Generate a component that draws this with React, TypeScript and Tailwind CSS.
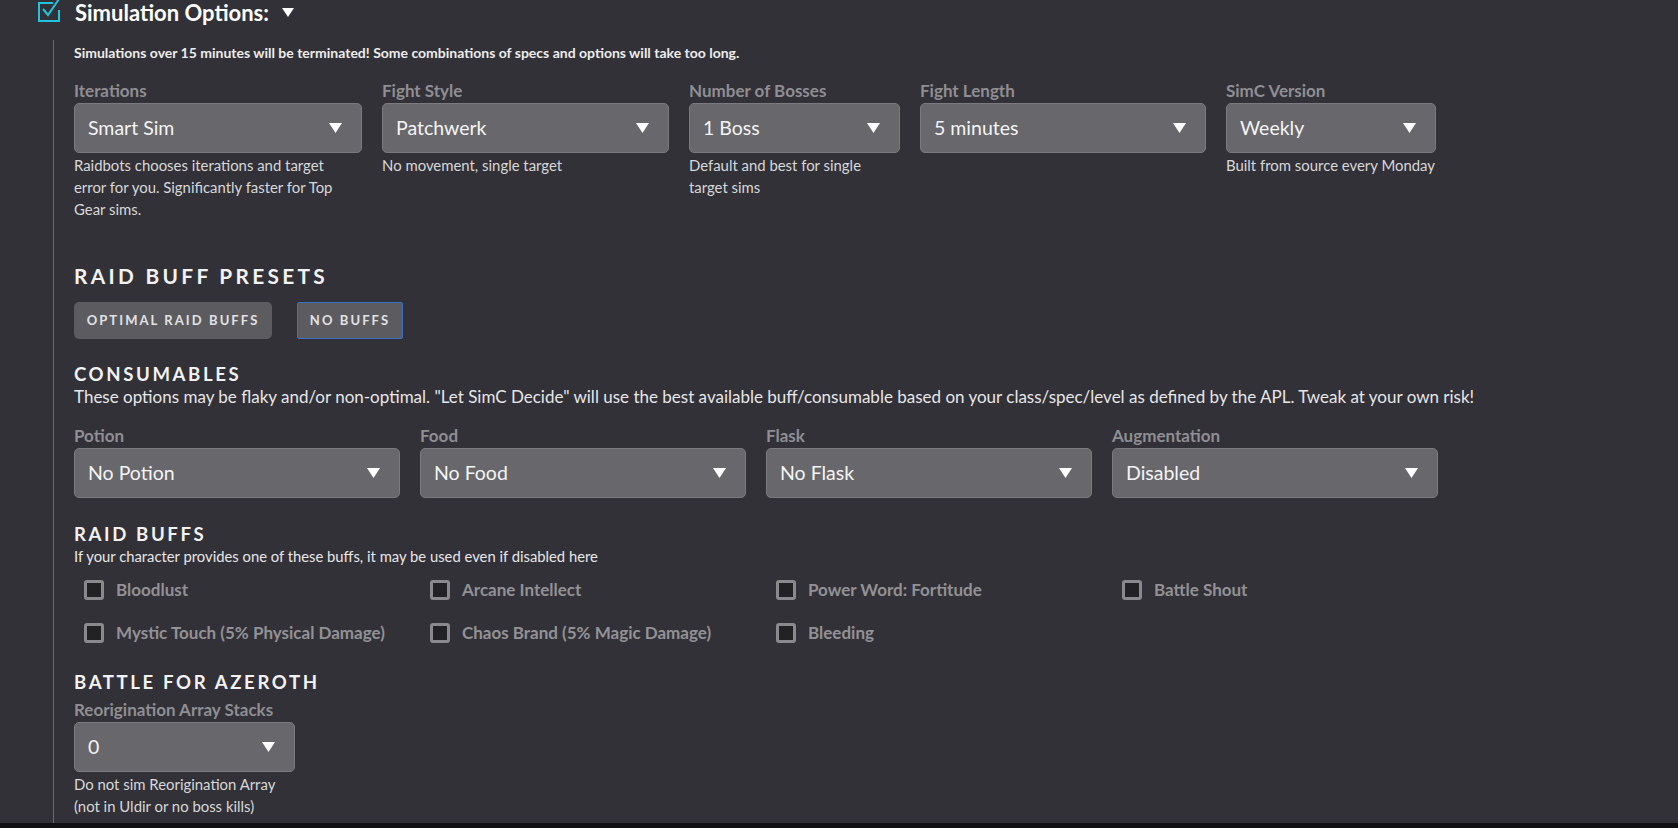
import React from "react";

type SelectProps = { label: string; value: string; help?: React.ReactNode; w: string };

function Caret() {
    return (
        <svg width="13" height="10" viewBox="0 0 13 10" className="shrink-0">
            <path d="M0 0 H13 L6.5 10 Z" fill="#ffffff" />
        </svg>
    );
}

function Select({ label, value, help, w }: SelectProps) {
    return (
        <div className={`${w} shrink-0`}>
            <div className="text-[17px] font-bold leading-[20px] text-[#8f8e93] mb-[2px]">{label}</div>
            <div className="h-[50px] rounded-[5px] border border-[#7b7a7f] bg-[#68676c] flex items-center justify-between pl-[13px] pr-[19px]">
                <span className="text-[19.5px] text-[#f4f4f4]">{value}</span>
                <Caret />
            </div>
            {help && <div className="mt-[1px] max-w-[266px] text-[14.9px] leading-[22px] text-[#d8d8da]">{help}</div>}
        </div>
    );
}

function Check({ label }: { label: string }) {
    return (
        <div className="w-[346px] h-[30px] pl-[10px] flex items-center gap-[12px]">
            <span className="w-[20px] h-[20px] rounded-[3px] border-[3px] border-[#8a898e] bg-[#222124]" />
            <span className="text-[17px] font-bold text-[#929196]">{label}</span>
        </div>
    );
}

const heading = "font-bold text-[#f2f2f2] uppercase";

export default function App() {
    return (
        <div className="h-[828px] w-full overflow-hidden bg-[#323137] font-['Lato','Liberation_Sans',sans-serif] flex flex-col">
            <div className="flex items-center h-[25px] pl-[37px]">
                <svg width="25" height="25" viewBox="0 0 25 25" className="-mt-[4px]">
                    <path d="M16 5 H2 V23 H22 V12" fill="none" stroke="#22c3dc" strokeWidth="2" />
                    <path d="M6 11 L11 17 L22 1" fill="none" stroke="#22c3dc" strokeWidth="2" />
                </svg>
                <span className="ml-[13px] text-[22px] font-bold text-white">Simulation Options:</span>
                <svg width="12" height="9" viewBox="0 0 12 9" className="ml-[13px]">
                    <path d="M0 0 H12 L6 9 Z" fill="#ffffff" />
                </svg>
            </div>

            <div className="ml-[53px] mt-[15px] flex-1 border-l border-[#6c6b71] pl-[20px] pt-[3px]">
                <div className="text-[14px] font-bold leading-[20px] text-[#ececec]">
                    Simulations over 15 minutes will be terminated! Some combinations of specs and options will take too long.
                </div>

                <div className="mt-[18px] flex gap-[20px]">
                    <Select w="w-[288px]" label="Iterations" value="Smart Sim" help="Raidbots chooses iterations and target error for you. Significantly faster for Top Gear sims." />
                    <Select w="w-[287px]" label="Fight Style" value="Patchwerk" help="No movement, single target" />
                    <Select w="w-[211px]" label="Number of Bosses" value="1 Boss" help="Default and best for single target sims" />
                    <Select w="w-[286px]" label="Fight Length" value="5 minutes" />
                    <Select w="w-[210px]" label="SimC Version" value="Weekly" help="Built from source every Monday" />
                </div>

                <div className={`mt-[44px] text-[20.8px] leading-[24px] tracking-[0.16em] ${heading}`}>Raid Buff Presets</div>
                <div className="mt-[14px] flex gap-[25px]">
                    <button className="h-[37px] w-[198px] rounded-[5px] bg-[#5c5b60] text-[13px] font-bold tracking-[0.16em] text-[#e2e2e4]">
                        OPTIMAL RAID BUFFS
                    </button>
                    <button className="h-[37px] w-[106px] rounded-[2px] border border-[#3c71c4] bg-[#5c5b60] text-[13px] font-bold tracking-[0.16em] text-[#e2e2e4]">
                        NO BUFFS
                    </button>
                </div>

                <div className={`mt-[23px] text-[18.6px] leading-[24px] tracking-[0.14em] ${heading}`}>Consumables</div>
                <div className="mt-[1px] text-[17px] leading-[20px] text-[#e6e6e8] whitespace-nowrap">
                    These options may be flaky and/or non-optimal. "Let SimC Decide" will use the best available buff/consumable based on your class/spec/level as defined by the APL. Tweak at your own risk!
                </div>
                <div className="mt-[19px] flex gap-[20px]">
                    <Select w="w-[326px]" label="Potion" value="No Potion" />
                    <Select w="w-[326px]" label="Food" value="No Food" />
                    <Select w="w-[326px]" label="Flask" value="No Flask" />
                    <Select w="w-[326px]" label="Augmentation" value="Disabled" />
                </div>

                <div className={`mt-[24px] text-[18.6px] leading-[24px] tracking-[0.14em] ${heading}`}>Raid Buffs</div>
                <div className="text-[14.8px] leading-[20px] text-[#e6e6e8]">
                    If your character provides one of these buffs, it may be used even if disabled here
                </div>
                <div className="mt-[9px] flex flex-col gap-[13px]">
                    <div className="flex">
                        <Check label="Bloodlust" />
                        <Check label="Arcane Intellect" />
                        <Check label="Power Word: Fortitude" />
                        <Check label="Battle Shout" />
                    </div>
                    <div className="flex">
                        <Check label="Mystic Touch (5% Physical Damage)" />
                        <Check label="Chaos Brand (5% Magic Damage)" />
                        <Check label="Bleeding" />
                    </div>
                </div>

                <div className={`mt-[22px] text-[18.6px] leading-[24px] tracking-[0.14em] ${heading}`}>Battle for Azeroth</div>
                <div className="mt-[6px] flex">
                    <Select
                        w="w-[221px]"
                        label="Reorigination Array Stacks"
                        value="0"
                        help={<>Do not sim Reorigination Array<br />(not in Uldir or no boss kills)</>}
                    />
                </div>
            </div>
            <div className="h-[5px] bg-[#111013]" />
        </div>
    );
}
